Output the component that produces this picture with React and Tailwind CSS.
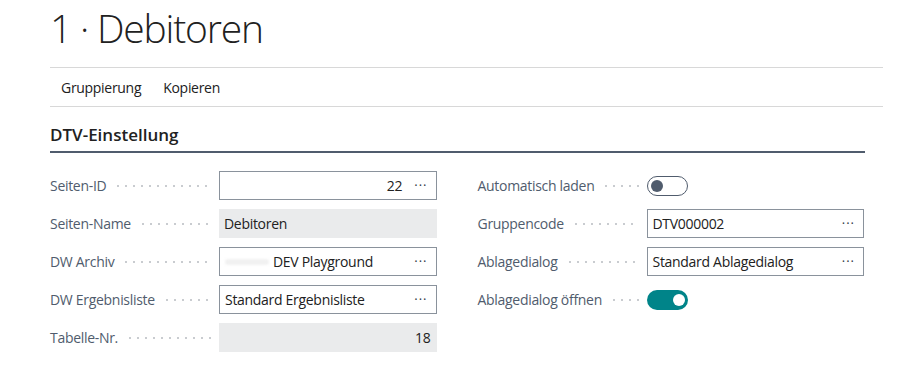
import { useState } from 'react';

const font = { fontFamily: '"Open Sans", "Noto Sans", sans-serif' };

// dotted leader between a label and its field
const Leader = () => (
  <div className="flex-1 h-[2px] mx-[8px] bg-[radial-gradient(circle,#c9ccd0_0.9px,transparent_1.1px)] bg-[length:8px_2px] bg-repeat-x" />
);

const Dots = () => (
  <span className="text-[#323b47] tracking-[1px] text-[13px] leading-none">···</span>
);

const Row = ({ label, children }) => (
  <div className="flex items-center h-[29px]">
    <div className="w-[169px] flex items-center">
      <span className="text-[14px] tracking-[-0.3px] text-[#505c6d] whitespace-nowrap">{label}</span>
      <Leader />
    </div>
    <div className="flex-1 flex items-center">{children}</div>
  </div>
);

const Field = ({ value, align = 'left', lookup = true, prefix }) => (
  <div className="w-full h-[29px] border border-[#8a929c] bg-white flex items-center pl-[5px] pr-[8px]">
    {prefix}
    <span className={`flex-1 text-[14px] tracking-[-0.3px] text-[#212121] ${align === 'right' ? 'text-right pr-[12px]' : ''}`}>
      {value}
    </span>
    {lookup && <Dots />}
  </div>
);

const ReadOnly = ({ value, align = 'left' }) => (
  <div className={`w-full h-[29px] bg-[#eaebec] flex items-center px-[5px] text-[14px] tracking-[-0.3px] text-[#212121] ${align === 'right' ? 'justify-end pr-[6px]' : ''}`}>
    {value}
  </div>
);

const Toggle = ({ on, onChange }) => (
  <button
    onClick={onChange}
    className={`w-[41px] h-[20px] rounded-full flex items-center px-[3px] ${
      on ? 'bg-[#008489] justify-end' : 'border border-[#505c6d] bg-white justify-start'
    }`}
  >
    <span className={`w-[12px] h-[12px] rounded-full ${on ? 'bg-white' : 'bg-[#505c6d]'}`} />
  </button>
);

export default function App() {
  const [autoLoad, setAutoLoad] = useState(false);
  const [openDialog, setOpenDialog] = useState(true);

  return (
    <div className="w-[909px] h-[389px] bg-white overflow-hidden" style={font}>
      <div className="pl-[50px] pr-[26px]">
        <h1 className="text-[39px] font-light text-[#212121] leading-[52px] pt-[2px] pb-[13px] tracking-[-1.2px]">
          1 · Debitoren
        </h1>

        <div className="h-[40px] border-t border-b border-[#d8d8d8] flex items-center">
          <button className="px-[11px] text-[14px] tracking-[-0.3px] text-[#212121]">Gruppierung</button>
          <button className="px-[11px] text-[14px] tracking-[-0.3px] text-[#212121]">Kopieren</button>
        </div>

        <div className="mr-[18px] mt-[16px] border-b-2 border-[#505c6d] pb-[4px]">
          <h2 className="text-[17px] font-semibold text-[#212121] leading-[24px]">DTV-Einstellung</h2>
        </div>

        <div className="grid grid-cols-2 gap-x-[41px] mr-[19px] pt-[18px]">
          <div className="flex flex-col gap-[9px]">
            <Row label="Seiten-ID">
              <Field value="22" align="right" />
            </Row>
            <Row label="Seiten-Name">
              <ReadOnly value="Debitoren" />
            </Row>
            <Row label="DW Archiv">
              <Field
                value="DEV Playground"
                prefix={<span className="w-[44px] h-[6px] mr-[4px] bg-[#f1f1f1] blur-[1px] rounded-sm" />}
              />
            </Row>
            <Row label="DW Ergebnisliste">
              <Field value="Standard Ergebnisliste" />
            </Row>
            <Row label="Tabelle-Nr.">
              <ReadOnly value="18" align="right" />
            </Row>
          </div>

          <div className="flex flex-col gap-[9px]">
            <Row label="Automatisch laden">
              <Toggle on={autoLoad} onChange={() => setAutoLoad(!autoLoad)} />
            </Row>
            <Row label="Gruppencode">
              <Field value="DTV000002" />
            </Row>
            <Row label="Ablagedialog">
              <Field value="Standard Ablagedialog" />
            </Row>
            <Row label="Ablagedialog öffnen">
              <Toggle on={openDialog} onChange={() => setOpenDialog(!openDialog)} />
            </Row>
          </div>
        </div>
      </div>
    </div>
  );
}
